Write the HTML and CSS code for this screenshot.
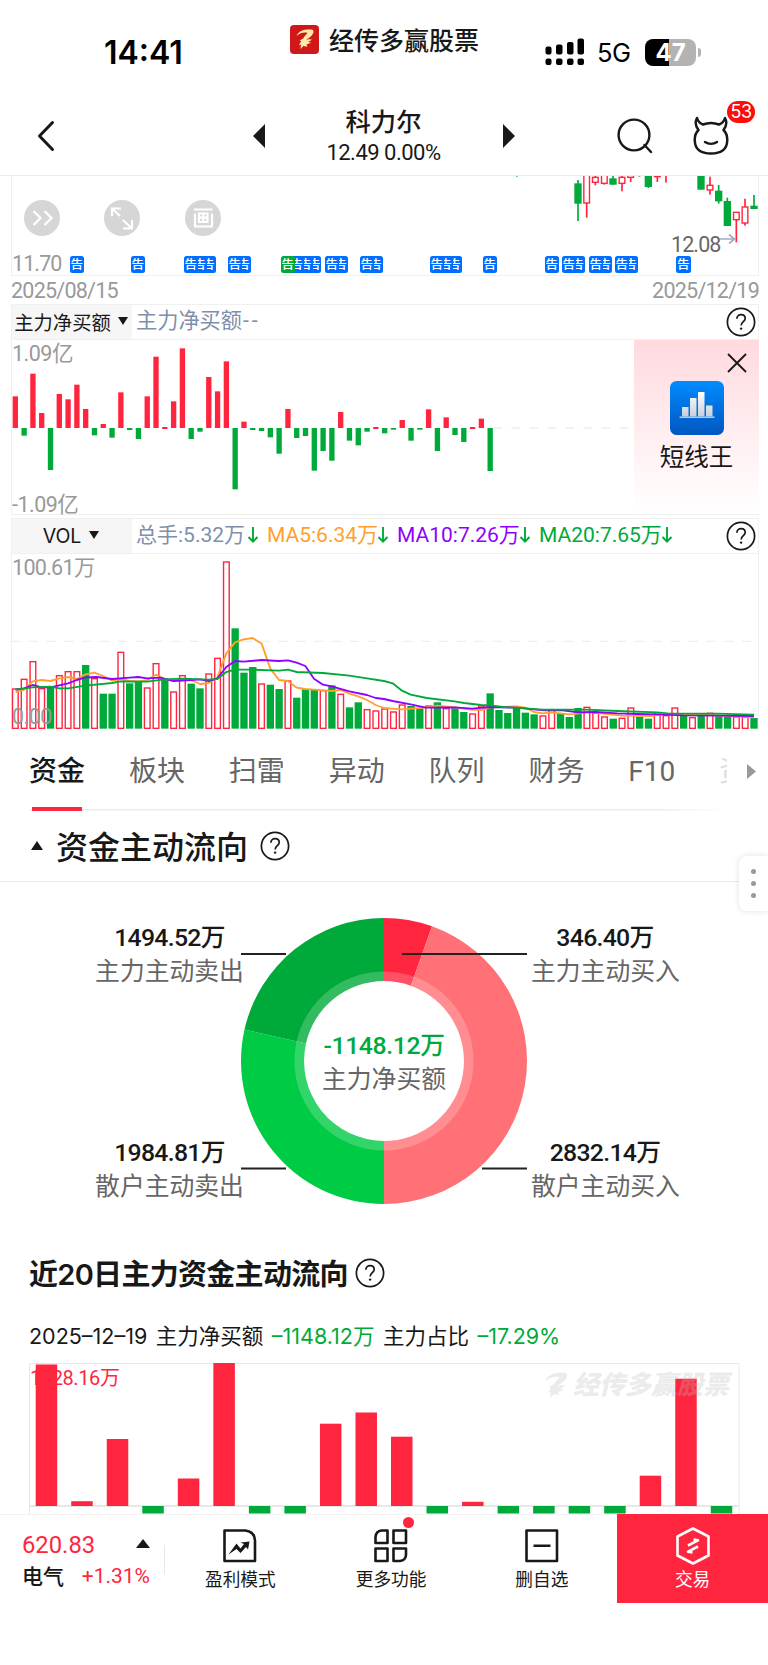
FILE: index.html
```html
<!DOCTYPE html>
<html lang="zh-CN">
<head>
  <meta charset="UTF-8" />
  <meta name="viewport" content="width=device-width, initial-scale=1.0" />
  <title>科力尔</title>
  <link rel="stylesheet" href="styles.css">
</head>
<body>
  <svg class="defs" width="0" height="0">
    <symbol id="icon-help" viewBox="0 0 30 30">
      <circle cx="15" cy="15" r="13.6" fill="none" stroke="#181818" stroke-width="1.7" />
      <path d="M10.9 11.8c0-2.5 1.7-4.2 4.2-4.2s4.1 1.6 4.1 3.8c0 3.2-4.1 3.4-4.1 7.2" fill="none" stroke="#181818" stroke-width="1.7" />
      <circle cx="15.1" cy="21.6" r="1.2" fill="#181818" />
    </symbol>
    <symbol id="icon-feather" viewBox="0 0 24 26">
      <path d="M1 9C4 2 12 0 22 1c2 2 1 5-1 7-2 3-6 4-8 7 3-2 6-2 8-1l-5 3 4 1-6 2 1 3-5-1-4 4 1-6-3 1 3-5-2-1 5-3c2-4 5-5 5-7C11 4 6 5 1 9z" fill="currentColor" />
    </symbol>
    <symbol id="icon-down" viewBox="0 0 12 18">
      <path d="M6 1v14.5M1.500 11L6 15.700l4.500-4.700" fill="none" stroke="#00aa3a" stroke-width="1.900" />
    </symbol>
  </svg>

  <div class="status-bar">
    <div class="time">14:41</div>
    <div class="app-name">
      <span class="app-logo"><svg width="20" height="20"><use href="#icon-feather" /></svg></span>
      <span>经传多赢股票</span>
    </div>
    <div class="status-right">
      <svg width="40" height="28" viewBox="0 0 40 28">
        <rect x="0.5" y="8.5" width="6" height="8" rx="2" />
        <rect x="11" y="6.5" width="6.5" height="10" rx="2" />
        <rect x="22" y="4" width="6.5" height="12.5" rx="2" />
        <rect x="32.5" y="0.5" width="6.5" height="16" rx="2" />
        <rect x="0.5" y="20.5" width="6" height="6.5" rx="2" />
        <rect x="11" y="20.5" width="6.5" height="6.5" rx="2" />
        <rect x="22" y="20.5" width="6.5" height="6.5" rx="2" />
        <rect x="32.5" y="20.5" width="6.5" height="6.5" rx="2" />
      </svg>
      <span class="network">5G</span>
      <span class="battery">47</span>
    </div>
  </div>

  <div class="header">
    <svg class="back" width="18" height="32" viewBox="0 0 18 32"><path d="M15.5 2.5L2.5 16l13 13.5" fill="none" stroke="#181818" stroke-width="3" stroke-linecap="round" stroke-linejoin="round" /></svg>
    <svg class="prev" width="12" height="24"><path d="M12 0v24L0 12z" fill="#181818" /></svg>
    <div class="stock">
      <div class="stock-name">科力尔</div>
      <div class="stock-price">12.49 0.00%</div>
    </div>
    <svg class="next" width="12" height="24"><path d="M0 0v24l12-12z" fill="#181818" /></svg>
    <svg class="search" width="36" height="36" viewBox="0 0 36 36"><g fill="none" stroke="#181818" stroke-width="2.4"><circle cx="17" cy="17" r="15.4" /><path d="M27.5 27l6.5 7" stroke-linecap="round" /></g></svg>
    <div class="robot">
      <svg width="36" height="40" viewBox="0 0 36 40"><g fill="none" stroke="#181818" stroke-width="2.5" stroke-linecap="round" stroke-linejoin="round"><path d="M4 2C2 5.500 2.500 10 5.500 14 2.500 17 1.500 21 1.800 25c.4 9 7.200 12.500 16.200 12.500S33.800 34 34.200 25c.3-4-.7-8-3.700-11 3-4 3.500-8.500 1.500-12-1 3.500-3 5.500-6 6.500-5-2-11-2-16 0C7 7.500 5 5.500 4 2z" /><path d="M12 26c3.500 2.300 8.500 2.300 12 0" /></g></svg>
      <span class="badge">53</span>
    </div>
  </div>

  <div class="kline">
    <svg id="kline" width="748" height="99" viewBox="33 18 2244 297"></svg>
    <div class="tools">
      <span class="tool"><svg width="36" height="36"><path d="M9.500 11l7 7-7 7M20.500 11l7 7-7 7" /></svg></span>
      <span class="tool"><svg width="36" height="36"><path d="M8 16V8.500h9M8 8.500l8 7.500M19 20l2 2M28 20v8.500h-9M28 28.500l-7-6.500" /></svg></span>
      <span class="tool"><svg width="36" height="36"><path d="M9 9.500h18.500M10 13.500v13h17v-13M14 13.500h8.500v8.500h-8.500zM18.300 13.500v8.500M14 17.700h8.500" stroke-width="1.700" /></svg></span>
    </div>
    <span class="low">12.08</span>
    <svg class="low-arrow" width="16" height="12"><path d="M0 6h14M9 1.500l5.500 4.500-5.500 4.500" fill="none" stroke="#a3adc2" stroke-width="1.700" /></svg>
    <span class="floor">11.70</span>
    <div id="notices"></div>
  </div>
  <div class="dates"><span>2025/08/15</span><span>2025/12/19</span></div>

  <div class="indicator-bar">
    <div class="indicator-tab"><span>主力净买额</span><i class="caret-down"></i></div>
    <span class="main-value">主力净买额<em>--</em></span>
    <svg class="help" width="30" height="30"><use href="#icon-help" /></svg>
  </div>
  <div class="panel flow-panel">
    <svg id="flow" width="748" height="175" viewBox="33 12 2244 525"></svg>
    <span class="axis top">1.09亿</span>
    <span class="axis bottom">-1.09亿</span>
    <div class="promo">
      <svg class="close" width="20" height="20"><path d="M1 1l18 18M19 1L1 19" stroke="#181818" stroke-width="1.800" /></svg>
      <svg width="54" height="54" viewBox="0 0 54 54">
        <defs>
          <linearGradient id="blue" x2="0" y2="1"><stop stop-color="#008cff" /><stop offset="1" stop-color="#0056c0" /></linearGradient>
          <linearGradient id="silver" x2="0" y2="1"><stop stop-color="#fff" /><stop offset="1" stop-color="#c8cfdb" /></linearGradient>
        </defs>
        <rect width="54" height="54" rx="6.500" fill="url(#blue)" />
        <path d="M12 26h6.500v9.500H12zM20 17h6.500v18.500H20zM28 11h6.500v24.500H28zM36 24.500h6.500v11H36z" fill="url(#silver)" />
        <path d="M9.500 36.300h35" stroke="#b9cbe6" stroke-width="1.600" />
      </svg>
      <span>短线王</span>
    </div>
  </div>

  <div class="indicator-bar vol-bar">
    <div class="indicator-tab"><span>VOL</span><i class="caret-down"></i></div>
    <div class="ma">
      <span class="c-slate">总手:5.32万</span><svg width="12" height="18"><use href="#icon-down" /></svg>
      <span class="c-orange">MA5:6.34万</span><svg width="12" height="18"><use href="#icon-down" /></svg>
      <span class="c-purple">MA10:7.26万</span><svg width="12" height="18"><use href="#icon-down" /></svg>
      <span class="c-green">MA20:7.65万</span><svg width="12" height="18"><use href="#icon-down" /></svg>
    </div>
    <svg class="help" width="30" height="30"><use href="#icon-help" /></svg>
  </div>
  <div class="panel vol-panel">
    <svg id="volume" width="748" height="175" viewBox="33 27 2244 525"></svg>
    <span class="axis top">100.61万</span>
    <span class="axis bottom">0.00</span>
  </div>

  <div class="tabs">
    <span class="tab active">资金</span>
    <span class="tab">板块</span>
    <span class="tab">扫雷</span>
    <span class="tab">异动</span>
    <span class="tab">队列</span>
    <span class="tab">财务</span>
    <span class="tab">F10</span>
    <span class="tab cut">资</span>
    <svg class="more" width="9" height="15"><path d="M0 0v15l9-7.500z" fill="#999" /></svg>
  </div>

  <div class="section-title">
    <i class="caret-up"></i>
    <h2>资金主动流向</h2>
    <svg width="30" height="30"><use href="#icon-help" /></svg>
    <div class="side-handle"><i></i><i></i><i></i></div>
  </div>

  <div class="donut-area">
    <div class="donut-col">
      <div class="donut-label"><b>1494.52万</b><span>主力主动卖出</span></div>
      <div class="donut-label"><b>1984.81万</b><span>散户主动卖出</span></div>
    </div>
    <div class="donut">
      <svg id="donut" width="286" height="286" viewBox="-143 -143 286 286"></svg>
      <div class="donut-center"><b>-1148.12万</b><span>主力净买额</span></div>
    </div>
    <div class="donut-col">
      <div class="donut-label"><b>346.40万</b><span>主力主动买入</span></div>
      <div class="donut-label"><b>2832.14万</b><span>散户主动买入</span></div>
    </div>
  </div>

  <div class="history-title">
    <h2>近20日主力资金主动流向</h2>
    <svg width="30" height="30"><use href="#icon-help" /></svg>
  </div>
  <div class="history-info">
    <span>2025–12–19</span><span>主力净买额</span><span class="c-green">–1148.12万</span><span>主力占比</span><span class="c-green">–17.29%</span>
  </div>
  <div class="history-chart">
    <span class="history-max">1528.16万</span>
    <svg id="history" width="711" height="151" viewBox="29 1364 711 151"></svg>
    <div class="watermark"><svg width="24" height="26"><use href="#icon-feather" /></svg><span>经传多赢股票</span></div>
  </div>

  <div class="bottom-bar">
    <div class="index-box">
      <div class="index-row"><span class="index-value">620.83</span><i class="caret-up"></i></div>
      <div class="index-row"><span class="index-name">电气</span><span class="index-rate">+1.31%</span></div>
    </div>
    <div class="action">
      <svg width="36" height="36" viewBox="0 0 36 36"><path d="M2.500 2.500h21q9 1 9.500 10v20.500H2.500z" fill="none" stroke="#181818" stroke-width="2.600" stroke-linejoin="round" /><path d="M6.500 26.500l8-11 4 5 3.500-4.500-3.500-1.500 9-1-1.500 8-2-2.500-5.500 6-4-4z" fill="#181818" /></svg>
      <span>盈利模式</span>
    </div>
    <div class="action">
      <svg width="36" height="36" viewBox="0 0 36 36"><g fill="none" stroke="#181818" stroke-width="2.600" stroke-linejoin="round"><path d="M8.500 2.500h6v12.500H2.500V9q.5-6 6-6.500zM20.500 2.500H33V15H20.500zM2.500 20.500h12V33h-12zM20.500 20.500H33V27q-.5 5.500-6 6h-6.500z" /></g></svg>
      <span>更多功能</span>
      <i class="dot"></i>
    </div>
    <div class="action">
      <svg width="36" height="36" viewBox="0 0 36 36"><path d="M2.500 2.500H33V33H2.500zM9.500 17.700h17" fill="none" stroke="#181818" stroke-width="2.600" stroke-linejoin="round" /></svg>
      <span>删自选</span>
    </div>
    <div class="action trade">
      <svg width="36" height="38" viewBox="0 0 36 38"><g fill="none" stroke="#fff" stroke-width="2.600" stroke-linejoin="round"><path d="M18 1.500l15.500 8v19L18 36.500l-15.500-8v-19z" /><path d="M13 18.500l10-5.200-4.500-.8M23 19.500l-10 5.200 4.500.8" stroke-width="2.600" /></g></svg>
      <span>交易</span>
    </div>
  </div>
  <script src="script.js"></script>
</body>
</html>
```
FILE: styles.css
```css
* { box-sizing: border-box; }
body {
  margin: 0;
  width: 768px; height: 1665px;
  overflow: hidden;
  background: #fff; color: #181818;
  font-family: Roboto, 'Noto Sans CJK SC', sans-serif;
}
h2 { margin: 0; font-weight: 500; }
svg { display: block; flex: none; }
i { display: block; }
.defs { position: absolute; }
.c-slate { color: #7f8fac; }
.c-orange { color: #ff9f2e; }
.c-purple { color: #9000ff; }
.c-green { color: #00aa3a; }

.status-bar {
  height: 96px; display: grid;
  grid-template-columns: 290px 1fr 223px;
  font-family: Inter, 'Noto Sans CJK SC', sans-serif;
}
.time { padding: 34px 0 0 104px; font-size: 32px; font-weight: 600; line-height: 37px; color: #000; }
.app-name {
  display: flex; align-items: center; gap: 10px;
  height: 40px; margin-top: 19px;
  font-size: 25px; font-weight: 500; white-space: nowrap;
}
.app-logo {
  width: 29px; height: 29px; border-radius: 4px; background: #d01818; color: #ffe9a8;
  display: flex; align-items: center; justify-content: center;
}
.app-name > span:last-child { margin-top: -1px; }
.status-right { display: flex; align-items: center; height: 28px; margin-top: 38px; }
.network { width: 34px; margin-left: 12px; font-size: 25.5px; letter-spacing: -0.5px; color: #000; padding-top: 1px; }
.battery {
  position: relative; width: 51px; height: 27px; margin-left: 14px; border-radius: 8px;
  background: linear-gradient(90deg, #000 47%, #b3b3b3 47%);
  color: #fff; font-size: 24px; font-weight: 700; line-height: 27px; text-align: center;
}
.battery::after {
  content: ''; position: absolute; right: -5px; top: 9px;
  width: 3px; height: 9px; border-radius: 0 4px 4px 0; background: #b3b3b3;
}

.header { display: flex; align-items: center; height: 80px; border-bottom: 1.5px solid #ebebeb; padding: 0 36px 0 37px; }
.prev { margin-left: 198px; }
.stock { width: 238px; text-align: center; padding-right: 1px; }
.stock-name { font-size: 25.3px; font-weight: 500; line-height: 32px; margin-top: 3px; }
.stock-price { font-size: 22px; font-weight: 400; line-height: 28px; letter-spacing: -0.5px; }
.search { margin-left: 102px; }
.robot { position: relative; margin-left: 40px; }
.badge {
  position: absolute; left: 34px; top: -15px; height: 22px; width: 28px;
  border-radius: 11px; background: #fe0b0b; color: #fff;
  font: 18px/22px Inter, sans-serif; text-align: center; letter-spacing: -0.5px;
}

.kline { position: relative; margin: 0 9px 0 11px; height: 99.5px; border: 1.5px solid #f0f0f0; border-width: 0 1.5px 1.5px; }
.kline > svg:first-child { margin-left: -1.5px; }
.tools { position: absolute; left: 12px; top: 24px; display: flex; gap: 44.4px; }
.tool { width: 36px; height: 36px; border-radius: 50%; background: #d6d6d6; }
.tool path { fill: none; stroke: #fff; stroke-width: 2.2; }
.low, .floor { position: absolute; font-size: 21.5px; line-height: 24px; color: #999; letter-spacing: -0.9px; }
.low { left: 659px; top: 57px; color: #666; }
.low-arrow { position: absolute; left: 708px; top: 57px; }
.floor { left: 0; top: 76px; }
.notice {
  position: absolute; top: 80px; width: 14.5px; height: 17px; border-radius: 2.5px;
  background: #006eff; color: #fff; font-size: 12.5px; font-weight: 500; line-height: 17px; text-align: center;
}
.notice.green { background: #00aa3a; }
.dates {
  display: flex; justify-content: space-between; height: 28px; padding: 0 9px 0 11px;
  font-size: 21.5px; line-height: 30px; letter-spacing: -0.75px; color: #999;
}

.indicator-bar {
  display: flex; align-items: center; height: 36px; margin: 0 9px 0 11px; white-space: nowrap;
  border: 1.5px solid #f0f0f0;
}
.indicator-tab {
  width: 120px; height: 34px; background: #f6f6f6; flex: none;
  display: flex; align-items: center; justify-content: center; gap: 7px; font-size: 19.3px; padding-right: 2px;
}
.vol-bar .indicator-tab { font-family: Inter, sans-serif; font-size: 19.5px; gap: 8px; }
.caret-down { border: 5px solid transparent; border-top: 8px solid #181818; border-bottom: 0; margin-top: -2px; }
.caret-up { border: 6px solid transparent; border-bottom: 9px solid #181818; border-top: 0; }
.main-value { margin-left: 4px; font-size: 21.2px; color: #7f8fac; line-height: 30px; margin-top: -1px; }
.main-value em { font-style: normal; letter-spacing: 3px; margin-left: 1px; }
.help { margin-left: auto; margin-right: 2px; }
.panel { position: relative; margin: 0 9px 0 11px; height: 175px; border: 1.5px solid #f0f0f0; border-width: 0 1.5px 1.5px; }
.panel > svg:first-child { margin-left: -1.5px; }
.flow-panel { margin-bottom: 3px; }
.axis { position: absolute; left: 0; font-size: 21.5px; line-height: 26px; color: #999; letter-spacing: -0.5px; }
.axis.top { top: 1px; }
.axis.bottom { bottom: -4px; }
.promo {
  position: absolute; right: -1px; top: 0; width: 125px; height: 173px; padding-top: 41px;
  background: linear-gradient(#ffdadf, #fff);
  display: flex; flex-direction: column; align-items: center; font-size: 24.5px; line-height: 46px;
}
.close { position: absolute; right: 12px; top: 13px; }
.ma { display: grid; grid-template-columns: 111px 20px 110px 20px 122px 20px 122px 14px; align-items: center; margin-left: 4px; font-size: 21px; letter-spacing: 0; line-height: 30px; }
.ma span { margin-top: -1px; }
.ma svg { margin-top: -2px; }
.vol-panel { border-bottom: 0; height: 176px; }
.vol-panel .axis.top { letter-spacing: -0.7px; }
.vol-panel .axis.bottom { bottom: 0; }

.tabs {
  position: relative; display: grid; grid-template-columns: repeat(7, 99.9px) 8px; grid-template-rows: 81px; height: 81px; padding-left: 29px;
  font-size: 28px; line-height: 84px; color: #666;
  background: linear-gradient(90deg, #ececec 90%, #fff) 30px bottom / 697px 1.5px no-repeat;
}
.tab.active { position: relative; color: #181818; font-weight: 500; }
.tab.active::after { content: ''; position: absolute; left: 3px; bottom: 0; width: 50px; height: 4px; background: #ff253f; }
.tab.cut { overflow: hidden; color: #ddd; margin-left: -9px; width: 8px; }
.more { position: absolute; right: 12px; top: 34px; }

.section-title { position: relative; display: flex; align-items: center; height: 71px; padding-left: 31px; border-bottom: 1.5px solid #ebebeb; }
.section-title h2 { margin: -2px 12px 0 13px; font-size: 32px; }
.side-handle {
  position: absolute; right: 0; top: 45px; width: 29px; height: 55px;
  border-radius: 8px 0 0 8px; background: #fff; box-shadow: 0 0 6px rgba(0,0,0,0.12);
  display: flex; flex-direction: column; align-items: center; justify-content: center; gap: 7px;
}
.side-handle i { width: 5px; height: 5px; border-radius: 50%; background: #999; }

.donut-area { display: grid; grid-template-columns: 241px 286px 241px; padding-top: 36px; height: 365.5px; }
.donut { position: relative; }
.donut svg { overflow: visible; }
.donut-center { position: absolute; inset: 0 0 auto; top: 111px; }
.donut-center, .donut-label { display: flex; flex-direction: column; text-align: center; font-size: 24.8px; color: #666; white-space: nowrap; line-height: 34px; }
.donut-label b, .donut-center b { font-size: 24.8px; font-weight: 500; letter-spacing: -0.7px; color: #181818; }
.donut-center b { color: #00aa3a; letter-spacing: -0.4px; }
.donut-col { display: flex; flex-direction: column; gap: 147.5px; padding: 3px 0 0 95px; width: 244px; }
.donut-col:last-child { padding-left: 4px; width: 152px; }

.history-title { display: flex; align-items: center; height: 52px; padding-left: 29px; }
.history-title h2 { font-size: 29px; margin: -2px 7px 0 0; font-family: Inter, 'Noto Sans CJK SC', sans-serif; font-weight: 600; letter-spacing: -0.7px; }
.history-info {
  display: flex; gap: 8.5px; height: 64px; padding: 0 0 0 29px; font-size: 21.5px; line-height: 75px;
  font-family: Inter, 'Noto Sans CJK SC', sans-serif; white-space: nowrap;
}
.history-chart { position: relative; height: 151px; margin-left: 29px; width: 711px; }
.history-max { position: absolute; left: 1px; top: 1px; font-size: 20px; line-height: 28px; letter-spacing: -0.4px; color: #ff253f; }
.history-chart > svg { position: relative; }
.watermark {
  position: absolute; left: 515px; top: 9px; display: flex; gap: 5px; align-items: center;
  color: #bbb; opacity: 0.28; font-size: 26px; line-height: 26px; font-weight: 900; font-style: italic; white-space: nowrap;
}

.bottom-bar { display: grid; grid-template-columns: 165px repeat(4, 150.75px); height: 89px; border-top: 1px solid #f2f2f2; background: #fff; }
.index-box { padding: 14px 15px 0 22px; background: linear-gradient(#e8e8e8, #e8e8e8) right 30px / 1px 29px no-repeat; }
.index-row { display: flex; justify-content: space-between; align-items: center; height: 31px; }
.index-value { font-size: 23.8px; color: #ff253f; }
.index-row .caret-up { border-width: 0 7px 9px; margin-top: -3px; }
.index-name { font-size: 21px; font-weight: 500; margin-top: -2px; }
.index-rate { font-size: 21px; color: #ff253f; }
.action { position: relative; display: flex; flex-direction: column; align-items: center; padding-top: 13px; font-size: 17.7px; line-height: 33px; }
.dot { position: absolute; left: 87px; top: 2px; width: 11px; height: 11px; border-radius: 50%; background: #ff253f; }
.trade { background: #ff253f; color: #fff; padding-top: 13px; line-height: 31px; margin-top: -1px; }
```
FILE: script.js
```js
const RED = '#ff253f';
const GREEN = '#00aa3a';
const STEP = 26.38;
const $ = id => document.getElementById(id);
const rect = (x, y, w, h, fill) => `<rect x="${x}" y="${y}" width="${w}" height="${h}" fill="${fill}"/>`;
const hollow = (x, y, w, h) => `<rect x="${x}" y="${y}" width="${w}" height="${h}" fill="#fff" stroke="${RED}" stroke-width="4.2"/>`;

// K线: [x, 颜色, 开收上沿, 下沿, 最高, 最低]
const candles = [
  [582, 'g', 40, 101, 30, 153], [608, 'r', 0, 99, 0, 143], [634, 'r', 22, 37, 0, 46], [661, 'r', 0, 40, 0, 44],
  [687, 'g', 25, 44, 15, 44], [714, 'r', 22, 40, 0, 64], [740, 'r', 10, 22, 0, 36], [793, 'g', 0, 51, 0, 54],
  [820, 'r', 0, 20, 0, 36], [846, 'r', 0, 12, 0, 38], [951, 'g', 0, 59, 0, 59], [978, 'r', 46, 60, 20, 74],
  [1004, 'g', 62, 94, 45, 101], [1030, 'g', 93, 168, 83, 168], [1057, 'r', 127, 149, 126, 217],
  [1083, 'r', 111, 159, 86, 167], [1110, 'g', 107, 117, 75, 117]
];
$('kline').innerHTML = candles.map(([cx, c, top, bottom, high, low]) => {
  const x = cx + 1152;
  const wick = rect(x - 2.5, high, 5, low - high, c === 'r' ? RED : GREEN);
  return wick + (c === 'r' ? hollow(x - 8.5, top, 17, bottom - top) : rect(x - 11, top, 22, bottom - top, GREEN));
}).join('') + rect(1548, 16, 5, 4, GREEN) + rect(1916, 16, 5, 4, GREEN);

// 公告: [left, 数量]
const notices = [[70, 1], [131, 1], [184, 3], [228, 2], [281, 4], [325, 2], [360, 2], [430, 3], [483, 1], [545, 1], [562, 2], [589, 2], [615, 2], [676.5, 1]];
notices.forEach(([left, count]) => {
  for (let i = count - 1; i >= 0; i--) {
    const el = document.createElement('span');
    el.className = 'notice' + (left === 281 && i === 0 ? ' green' : '');
    el.textContent = '告';
    el.style.left = (left - 12.5 + i * 8.8) + 'px';
    $('notices').appendChild(el);
  }
});

// 主力净买额
const flow = [95, -23, 163, 45, -126, 102, 86, 130, 57, -22, 12, -29, 107, -6, -33, 95, 214, 3, 80, 239, -33, -11, 153, 110, 200,
  -184, 19, -6, -9, -28, -77, 57, -30, -24, -128, -69, -98, 48, -38, -52, -11, 3, -16, -5, 24, -38, -5, 56, -69, 32, -21, -42, 3, 28, -129];
$('flow').innerHTML = '<path d="M1480 276H2240" stroke="#eee" stroke-width="4" stroke-dasharray="27 27"/>' +
  flow.map((v, i) => rect(38 + i * STEP, v > 0 ? 276 - v : 276, 16, Math.abs(v) + (v === 3 ? 3 : 0), v > 0 ? RED : GREEN)).join('');

// 成交量
const volume = ('r431 r402 r349 r430 g425 r391 r379 r379 g360 r400 g446 g446 r321 g415 g410 r428 r355 g404 r440 r391 g416 g430 r386 r339 r50 ' +
  'g250 g383 g366 r416 g419 g432 r407 g458 g433 g433 r436 g421 r447 g487 g472 r493 r497 r491 r500 r479 g483 g490 r482 g472 r490 g490 g501 ' +
  'r506 r482 g445 g495 g504 g487 g503 g508 r512 r494 g507 g516 g489 r486 r503 r515 g521 r519 r488 g515 g521 r502 r511 r488 g511 r517 g510 ' +
  'r504 g514 g515 r515 r516 g519').split(' ');
const ma = [
  ['#ff9f2e', '47,441 72,434 98,409 125,405 151,408 178,400 204,396 230,402 257,388 283,383 309,393 336,407 362,402 389,408 415,409 441,406 468,389 494,402 520,407 547,403 573,405 600,417 626,414 652,398 679,325 705,292 731,283 758,279 785,296 811,371 837,405 864,408 890,428 916,432 942,434 995,438 1022,435 1048,446 1075,454 1101,465 1127,480 1152,489 1178,491 1206,493 1258,489 1312,482 1364,487 1412,494 1443,495 1470,487 1550,484 1576,488 1602,501 1629,505 1655,502 1708,508 1734,506 1760,500 1802,505 1866,512 1952,513 2002,506 2092,508 2262,517'],
  ['#9000ff', '47,434 72,430 98,420 125,427 151,427 178,421 204,415 230,405 257,397 290,396 336,402 389,398 415,396 441,400 480,398 520,408 573,405 600,403 626,408 652,400 679,366 705,348 731,350 785,345 837,348 864,346 890,353 916,363 942,401 969,419 995,424 1048,439 1101,450 1127,459 1152,462 1178,468 1232,478 1277,488 1364,487 1417,491 1470,486 1550,488 1632,496 1682,495 1734,502 1787,501 1852,505 1912,507 1972,508 2052,511 2152,512 2262,513'],
  [GREEN, '47,434 98,427 151,425 178,430 204,430 257,422 336,414 362,409 441,410 494,403 547,401 626,404 652,402 679,381 705,374 758,374 837,377 864,374 890,381 969,384 1048,392 1101,400 1152,408 1178,415 1206,437 1232,449 1280,459 1364,469 1392,474 1443,480 1470,481 1523,487 1576,490 1629,494 1760,494 1852,498 1972,502 2002,505 2152,506 2262,509']
];
$('volume').innerHTML = '<path d="M33 289H2270" stroke="#eee" stroke-width="4" stroke-dasharray="27 26.5"/>' +
  volume.map((s, i) => {
    const y = +s.slice(1), x = 36 + i * STEP;
    return s[0] === 'r' ? hollow(x + 1.5, y + 1, 17, 549 - y) : rect(x - 1, y, 22, 551 - y, GREEN);
  }).join('') +
  ma.map(([c, p]) => `<polyline points="${p}" fill="none" stroke="${c}" stroke-width="5.5" stroke-linejoin="round"/>`).join('');

// 资金环形图，顺时针：买入占右半圆，卖出占左半圆
const halves = [
  [[346.4, RED], [2832.14, '#ff7176']],
  [[1984.81, '#00cb45'], [1494.52, GREEN]]
];
const point = (a, r) => `${r * Math.sin(a)} ${-r * Math.cos(a)}`;
let angle = 0;
let ring = '';
halves.forEach(half => {
  const sum = half[0][0] + half[1][0];
  half.forEach(([v, color]) => {
    const end = angle + v / sum * Math.PI;
    ring += `<path d="M${point(angle, 143)}A143 143 0 0 1 ${point(end, 143)}L${point(end, 80)}A80 80 0 0 0 ${point(angle, 80)}z" fill="${color}"/>`;
    angle = end;
  });
});
$('donut').innerHTML = ring + '<circle r="84.8" fill="none" stroke="#fff" stroke-opacity="0.2" stroke-width="9.5"/>' +
  '<path d="M-143-107h45M18-107h125M-143 107.5h45M98 107.5h45" stroke="#222" stroke-width="1.8"/>';

// 近20日，0 以下只露出一截
const history20 = [1365.5, 1502.2, 1440, 0, 1479.5, 1364, 0, 0, 1424.7, 1413.5, 1437.7, 0, 1502.8, 0, 0, 0, 0, 1476.7, 1379.7, 0];
$('history').innerHTML = '<path d="M29.5 1515V1364.5H739V1515" fill="none" stroke="#e8e8e8"/>' + rect(29, 1506, 710, 2, '#e8e8e8') +
  history20.map((y, i) => y ? rect(35.7 + i * 35.53, y, 21.5, 1507 - y, RED) : rect(35.7 + i * 35.53, 1507, 21.5, 7.5, GREEN)).join('');
```
